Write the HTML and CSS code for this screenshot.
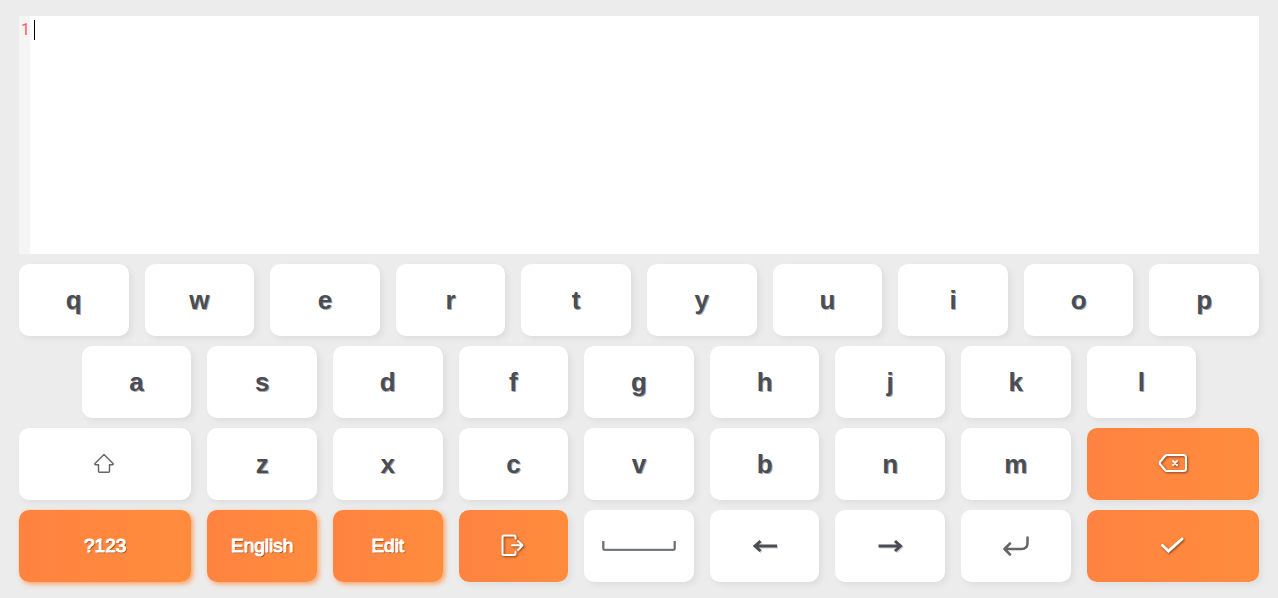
FILE: index.html
```html
<!DOCTYPE html>
<html lang="en">
<head>
<meta charset="utf-8">
<title>Keyboard</title>
<link rel="stylesheet" href="styles.css">
</head>
<body>
<main class="app">
  <section class="editor">
    <div class="gutter">1</div>
    <textarea class="input" aria-label="Text" autofocus></textarea>
    <span class="caret"></span>
  </section>
  <section class="keyboard" aria-label="Keyboard">
    <button class="key">q</button>
    <button class="key">w</button>
    <button class="key">e</button>
    <button class="key">r</button>
    <button class="key">t</button>
    <button class="key">y</button>
    <button class="key">u</button>
    <button class="key">i</button>
    <button class="key">o</button>
    <button class="key">p</button>

    <button class="key indent">a</button>
    <button class="key">s</button>
    <button class="key">d</button>
    <button class="key">f</button>
    <button class="key">g</button>
    <button class="key">h</button>
    <button class="key">j</button>
    <button class="key">k</button>
    <button class="key">l</button>

    <button class="key wide first" aria-label="Shift">
      <svg class="icon" width="24" height="24" viewBox="0 0 24 24" fill="none" stroke="#66676a" stroke-width="1.5" stroke-linejoin="round"><path d="M11 2.500 20 11.500Q20.500 12.700 19.500 12.700H16.500V19Q16.500 20.300 15.500 20.300H6.500Q5.500 20.300 5.500 19V12.700H2.500Q1.500 12.700 2 11.500Z"/></svg>
    </button>
    <button class="key">z</button>
    <button class="key">x</button>
    <button class="key">c</button>
    <button class="key">v</button>
    <button class="key">b</button>
    <button class="key">n</button>
    <button class="key">m</button>
    <button class="key wide accent" aria-label="Backspace">
      <svg class="icon shadow" width="32" height="24" viewBox="0 0 32 24" fill="none" stroke="#fff" stroke-width="2" stroke-linecap="round" stroke-linejoin="round"><path d="M10 3H26.500Q29 3 29 5.500V16.500Q29 19 26.500 19H10Q9 19 8 18L3 12Q2.500 11 3 10L8 4Q9 3 10 3Z"/><path d="M16 9 20 13M20 9 16 13"/></svg>
    </button>

    <button class="key wide accent glow label first">?123</button>
    <button class="key accent glow label">English</button>
    <button class="key accent glow label">Edit</button>
    <button class="key accent" aria-label="Exit">
      <svg class="icon shadow" width="26" height="26" viewBox="0 0 26 26" fill="none" stroke="#fff" stroke-width="2" stroke-linecap="round" stroke-linejoin="round"><path d="M15.500 5.500V4Q15.500 2.500 14 2.500H4Q2.500 2.500 2.500 4V20.500Q2.500 22 4 22H14Q15.500 22 15.500 20.500V19"/><path d="M12 12.300H22.500M18 8 22.500 12.300 18 17"/></svg>
    </button>
    <button class="key" aria-label="Space">
      <svg class="icon" width="74" height="12" viewBox="0 0 74 12" fill="none"><path d="M2 1V8Q2 9.500 3.500 9.500H70.500Q72 9.500 72 8V1" stroke="#b9bec6" stroke-width="2"/><path d="M1 1V8.500Q1 10 2.500 10H71.500Q73 10 73 8.500V1" stroke="#595c62" stroke-width="1.500"/></svg>
    </button>
    <button class="key" aria-label="Left">
      <svg class="icon arrow" width="26" height="16" viewBox="0 0 26 16" fill="none" stroke="#4b4d54" stroke-width="3"><path d="M2.500 8H25M8.500 3 3 8 8.500 13"/></svg>
    </button>
    <button class="key" aria-label="Right">
      <svg class="icon arrow" width="26" height="16" viewBox="0 0 26 16" fill="none" stroke="#4b4d54" stroke-width="3"><path d="M1.500 8H24M18 3 23.500 8 18 13"/></svg>
    </button>
    <button class="key" aria-label="Enter">
      <svg class="icon" width="28" height="22" viewBox="0 0 28 22" fill="none" stroke="#666" stroke-width="2.500" stroke-linecap="round" stroke-linejoin="round"><path d="M25.500 2.500V8Q25.500 14 19.500 14H2.500M8 8.500 2.500 14 8 19.500"/></svg>
    </button>
    <button class="key wide accent" aria-label="Done">
      <svg class="icon shadow" width="26" height="20" viewBox="0 0 26 20" fill="none" stroke="#fff" stroke-width="3" stroke-linecap="round"><path d="M2.500 9.500 8.500 15 22 3"/></svg>
    </button>
  </section>
</main>
</body>
</html>
```
FILE: styles.css
```css
* {
  box-sizing: border-box;
}

body {
  margin: 0;
  background: #ececec;
  font-family: "Liberation Sans", Arial, sans-serif;
}

.app {
  display: flex;
  flex-direction: column;
  gap: 10px;
  min-height: 100vh;
  padding: 16px 19px;
}

.editor {
  position: relative;
  display: flex;
  flex: 1;
  background: #fff;
}

.gutter {
  width: 11px;
  padding: 4px 0 0 2px;
  background: #f5f5f5;
  color: #ff5c5c;
  font-family: Roboto, sans-serif;
  font-size: 16px;
  line-height: 20px;
}

.input {
  flex: 1;
  padding: 4px;
  border: 0;
  outline: 0;
  resize: none;
  background: transparent;
  caret-color: transparent;
  font: inherit;
}

.caret {
  position: absolute;
  top: 4px;
  left: 15px;
  width: 1px;
  height: 20px;
  background: #000;
}

.keyboard {
  display: grid;
  grid-template-columns: repeat(20, minmax(0, 1fr));
  grid-auto-rows: 72px;
  gap: 10px 16px;
}

.key {
  display: flex;
  align-items: center;
  justify-content: center;
  grid-column: span 2;
  padding: 0;
  border: 0;
  border-radius: 10px;
  background: #fff;
  box-shadow: 3px 3px 6px rgba(0, 0, 0, 0.06);
  color: #4b4d54;
  font-family: inherit;
  font-size: 26px;
  font-weight: 700;
  line-height: 32px;
  text-shadow: 1px 1px 0 rgba(0, 0, 0, 0.35);
}

.key.indent {
  grid-column: 2 / span 2;
}

.key.wide {
  grid-column: span 3;
}

.key.wide.first {
  grid-column: 1 / span 3;
}

.key.accent {
  background: linear-gradient(90deg, #ff8340, #ff8c3d);
  color: #fff;
}

.key.glow {
  box-shadow: 2px 2px 5px rgba(255, 140, 61, 0.8);
}

.key.label {
  font-size: 19px;
  font-weight: 400;
  line-height: 24px;
  text-shadow: 1px 1px 1px rgba(0, 0, 0, 0.6);
  -webkit-text-stroke: 1px currentColor;
}

.icon {
  display: block;
}

.shadow {
  filter: drop-shadow(1px 1px 1px rgba(0, 0, 0, 0.5));
}

.arrow {
  filter: drop-shadow(1px 1px 0 rgba(0, 0, 0, 0.2));
}
```
